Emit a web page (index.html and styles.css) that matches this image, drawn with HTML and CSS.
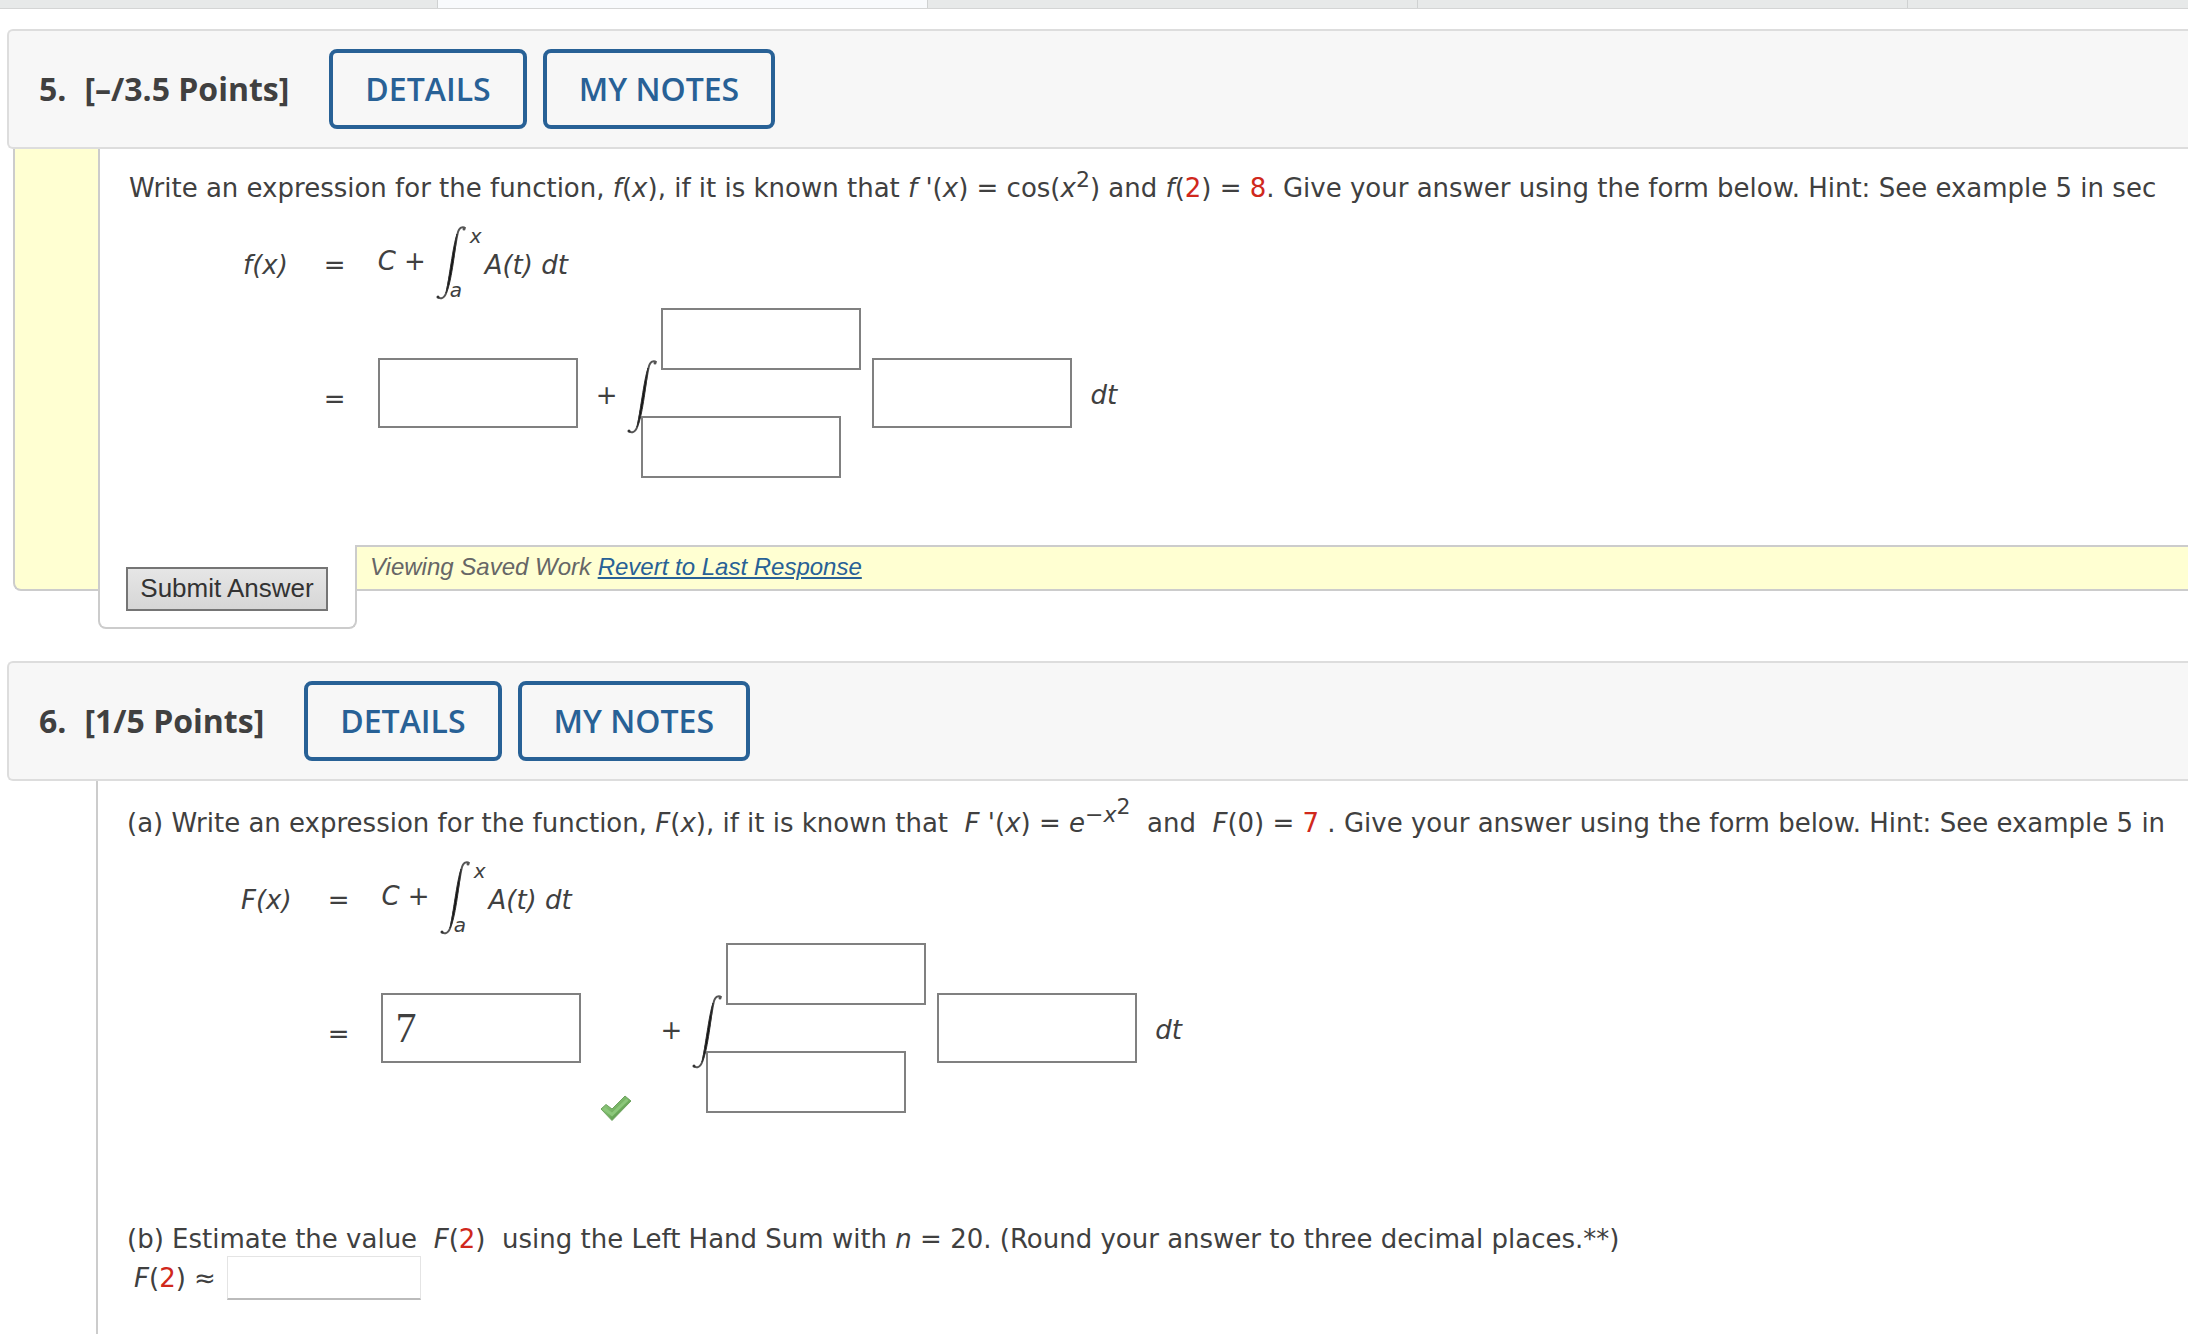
FILE: index.html
```html
<!DOCTYPE html>
<html lang="en">
<head>
<meta charset="utf-8">
<title>Homework</title>
<link rel="stylesheet" href="styles.css">
</head>
<body>
<svg class="defs" aria-hidden="true">
  <symbol id="integral" viewBox="0 0 30 74">
    <path d="M1.500 70.500C3 73 8 74 10.500 66C13.500 55 19.500 17 21.500 8C23 1 27 0 29.500 2.500" fill="none" stroke="#555" stroke-width="2"/>
    <path d="M10 67C13 54 17 19 21 8C19.500 22 15.500 54 11.500 64Z" fill="#111" stroke="#333" stroke-width="1"/>
    <circle cx="2" cy="71" r="1.500" fill="#333"/>
    <circle cx="28" cy="3" r="1.500" fill="#555"/>
  </symbol>
</svg>

<nav class="tabs" aria-label="Windows"><span class="tab"></span><span class="tab tab-current"></span><span class="tab"></span><span class="tab"></span><span class="tab"></span></nav>

<main>
  <section class="question">
    <header class="bar">
      <h2 class="title"><span class="number">5.</span><span>[–/3.5 Points]</span></h2>
      <button class="action" type="button">DETAILS</button>
      <button class="action" type="button">MY NOTES</button>
    </header>
    <div class="saved">
      <div class="panel">
        <p class="prompt">Write an expression for the function, <i>f</i>(<i>x</i>), if it is known that <i>f</i> '(<i>x</i>) = cos(<i>x</i><sup>2</sup>) and <i>f</i>(<b>2</b>) = <b>8</b>. Give your answer using the form below. Hint: See example 5 in sec</p>
        <div class="equation">
          <i class="lhs">f(x)</i><span class="low">=</span>
          <div class="side">
            <span class="constant"><i>C</i> +</span>
            <span class="integral"><svg class="sign" aria-hidden="true"><use href="#integral"/></svg><i class="upper">x</i><i class="lower">a</i></span>
            <i class="low">A(t) dt</i>
          </div>
          <span class="equals">=</span>
          <div class="side">
            <input class="box" type="text" aria-label="Constant term">
            <span class="plus">+</span>
            <span class="integral integral-form"><svg class="sign" aria-hidden="true"><use href="#integral"/></svg><input class="box box-limit upper" type="text" aria-label="Upper limit"><input class="box box-limit lower" type="text" aria-label="Lower limit"></span>
            <input class="box integrand" type="text" aria-label="Integrand">
            <i class="low">dt</i>
          </div>
        </div>
      </div>
      <div class="foot">
        <div class="submit-tab"><button class="submit" type="button">Submit Answer</button></div>
        <p class="status">Viewing Saved Work <a href="#revert">Revert to Last Response</a></p>
      </div>
    </div>
  </section>

  <section class="question">
    <header class="bar">
      <h2 class="title"><span class="number">6.</span><span>[1/5 Points]</span></h2>
      <button class="action" type="button">DETAILS</button>
      <button class="action" type="button">MY NOTES</button>
    </header>
    <div class="open">
      <p class="prompt">(a) Write an expression for the function, <i>F</i>(<i>x</i>), if it is known that&nbsp; <i>F '</i>(<i>x</i>) = <i>e</i><sup>−<i>x</i><sup>2</sup></sup>&nbsp; and&nbsp; <i>F</i>(0) = <b>7</b> . Give your answer using the form below. Hint: See example 5 in</p>
      <div class="equation">
        <i class="lhs">F(x)</i><span class="low">=</span>
        <div class="side">
          <span class="constant"><i>C</i> +</span>
          <span class="integral"><svg class="sign" aria-hidden="true"><use href="#integral"/></svg><i class="upper">x</i><i class="lower">a</i></span>
          <i class="low">A(t) dt</i>
        </div>
        <span class="equals">=</span>
        <div class="side">
          <input class="box" type="text" value="7" aria-label="Constant term">
          <svg class="check" viewBox="0 0 32 26" role="img" aria-label="Correct">
            <defs><linearGradient id="leaf" x1="0" y1="0" x2="1" y2="1"><stop offset="0" stop-color="#9bd08a"/><stop offset=".5" stop-color="#76b364"/><stop offset="1" stop-color="#3f7f33"/></linearGradient></defs>
            <path d="M1 14L6 9.500L12 14L25 1L31 6L12 25.500Z" fill="url(#leaf)" stroke="#6ea35f" stroke-width="1"/>
            <path d="M4 13.500L12 19.500L27.500 4.500" fill="none" stroke="#8bc77a" stroke-width="3"/>
          </svg>
          <span class="plus">+</span>
          <span class="integral integral-form"><svg class="sign" aria-hidden="true"><use href="#integral"/></svg><input class="box box-limit upper" type="text" aria-label="Upper limit"><input class="box box-limit lower" type="text" aria-label="Lower limit"></span>
          <input class="box integrand" type="text" aria-label="Integrand">
          <i class="low">dt</i>
        </div>
      </div>
      <p class="prompt part">(b) Estimate the value&nbsp; <i>F</i>(<b>2</b>)&nbsp; using the Left Hand Sum with <i>n</i> = 20. (Round your answer to three decimal places.**)</p>
      <div class="estimate"><label for="estimate"><i>F</i>(<b>2</b>) ≈</label><input class="short" id="estimate" type="text"></div>
    </div>
  </section>
</main>
</body>
</html>
```
FILE: styles.css
```css
* {
  box-sizing: border-box;
}

html {
  overflow: hidden;
}

body {
  margin: 0;
  min-height: 100vh;
  display: flex;
  flex-direction: column;
  background: #fff;
  color: #404040;
  font: 26px/32px "DejaVu Sans", Verdana, sans-serif;
}

p,
h2 {
  margin: 0;
}

b {
  font-weight: 400;
  color: #d0281c;
}

.defs {
  display: none;
}

.tabs {
  display: grid;
  grid-template-columns: 438px repeat(3, 490px) 1fr;
  height: 9px;
  border-bottom: 1px solid #d4d5d5;
  background: #e7e9e9;
}

.tab {
  border-right: 1px solid #cfd1d1;
}

.tab:last-child {
  border-right: 0;
}

.tab-current {
  background: #f8fafc;
}

main {
  flex: 1;
  display: flex;
  flex-direction: column;
  gap: 32px;
  padding: 20px 0 0 7px;
}

.question {
  display: flex;
  flex-direction: column;
}

.question:last-child {
  flex: 1;
}

.bar {
  display: flex;
  align-items: center;
  gap: 16px;
  height: 120px;
  padding-left: 30px;
  border: 2px solid #ddd;
  border-right: 0;
  border-radius: 6px 0 0 6px;
  background: #f7f7f7;
}

.title {
  display: flex;
  gap: 18px;
  margin-right: 24px;
  font: 700 32px/40px "Open Sans", sans-serif;
}

.action {
  height: 80px;
  padding: 0 32px;
  border: 4px solid #286196;
  border-radius: 8px;
  background: none;
  color: #286196;
  font: 600 32px/40px "Open Sans", sans-serif;
}

.saved {
  margin: 0 0 38px 6px;
  padding-left: 83px;
  border: 2px solid #ccc;
  border-width: 0 0 2px 2px;
  border-radius: 0 0 0 8px;
  background: #ffffd2;
}

.panel,
.open {
  border-left: 2px solid #ccc;
  background: #fff;
}

.panel {
  height: 396px;
  padding: 23px 0 0 29px;
}

/* The submit tab hangs below the yellow frame. */
.foot {
  display: flex;
  align-items: flex-start;
  margin-bottom: -40px;
}

.submit-tab {
  height: 84px;
  width: 259px;
  padding: 22px 0 0 26px;
  border: 2px solid #ccc;
  border-top: 0;
  border-radius: 0 0 8px 8px;
  background: #fff;
}

.submit {
  width: 202px;
  height: 44px;
  padding: 0 0 2px;
  border: 2px solid #757575;
  background: linear-gradient(#e6e6e6, #d6d6d6);
  color: #333;
  font: 26px/32px "Liberation Sans", Arial, sans-serif;
}

.status {
  flex: 1;
  padding: 4px 0 0 13px;
  border-top: 2px solid #ccc;
  color: #666;
  font: italic 24px/32px "Liberation Sans", Arial, sans-serif;
}

.status a {
  color: #286196;
}

.open {
  flex: 1;
  margin-left: 89px;
  padding: 26px 0 0 29px;
}

.prompt {
  white-space: nowrap;
}

sup {
  font-size: 22px;
  line-height: 0;
}

.equation {
  display: grid;
  grid-template-columns: auto auto 1fr;
  align-items: center;
  column-gap: 32px;
  row-gap: 8px;
  padding: 22px 0 0 114px;
}

.lhs {
  padding: 4px 4px 0 0;
}

.low {
  padding-top: 4px;
}

.equals {
  grid-column: 2;
  padding-top: 12px;
}

.side {
  display: flex;
  align-items: center;
}

.constant {
  padding: 0 10px 4px 0;
}

.integral {
  display: grid;
  grid-template-columns: 14px 20px auto;
  grid-template-rows: 20px 34px 20px;
  margin-right: 3px;
  font-size: 20px;
  line-height: 20px;
}

.integral-form {
  grid-template-rows: 62px 46px 62px;
  margin-right: 0;
}

.sign {
  grid-area: 1 / 1 / 4 / 3;
  align-self: center;
  width: 30px;
  height: 74px;
}

.integral-form .sign {
  margin-top: 8px;
}

.upper {
  grid-area: 1 / 3;
}

.lower {
  grid-area: 3 / 2 / 4 / 4;
}

.plus {
  padding: 4px 10px 0 18px;
}

.box {
  width: 200px;
  height: 70px;
  padding: 0 12px;
  border: 2px solid #808080;
  border-radius: 0;
  background: #fff;
  color: #404040;
  font: 42px/48px "Liberation Serif", serif;
}

.box-limit {
  height: 62px;
}

.integrand {
  margin: 0 18px 0 11px;
}

.check {
  align-self: flex-end;
  width: 32px;
  height: 26px;
  margin: 0 10px -8px 19px;
}

.part {
  padding-top: 110px;
}

.estimate {
  display: flex;
  align-items: center;
  gap: 11px;
  padding: 1px 0 0 7px;
}

.short {
  width: 194px;
  height: 44px;
  border: 1px solid #e4e4e4;
  border-bottom: 2px solid #bbb;
  background: #fff;
  color: #404040;
  font: 26px/32px "DejaVu Sans", Verdana, sans-serif;
}
```
